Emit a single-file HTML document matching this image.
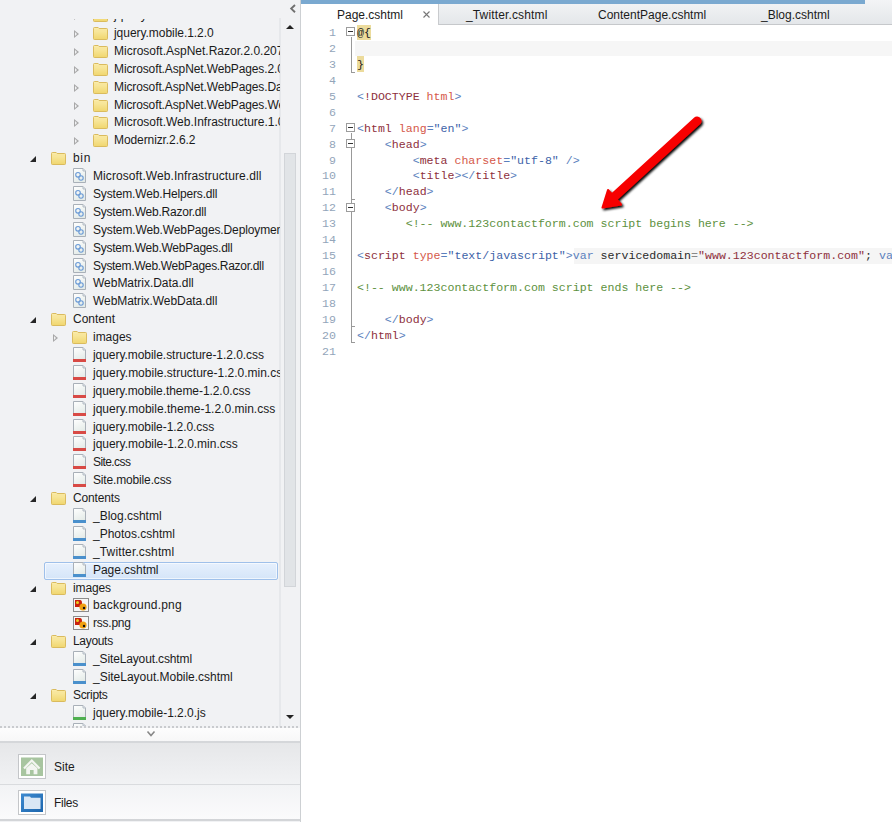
<!DOCTYPE html>
<html><head><meta charset="utf-8">
<style>
*{margin:0;padding:0;box-sizing:border-box}
html,body{width:892px;height:822px;overflow:hidden;background:#fff}
body{position:relative;font-family:"Liberation Sans",sans-serif}
#left{position:absolute;left:0;top:0;width:301px;height:822px;background:#f1f2f4;border-right:1px solid #cdd0d3;overflow:hidden}
#tree{position:absolute;left:0;top:19px;width:280px;height:707px;overflow:hidden}
.row{position:absolute;left:0;width:280px;height:18px}
.lbl{position:absolute;top:0;height:18px;line-height:18px;font-size:12px;color:#1b1b1b;white-space:nowrap}
.icw{position:absolute;line-height:0}
.ic{display:block}
.tri-e{position:absolute;top:7px;width:0;height:0;border-left:6px solid transparent;border-bottom:6px solid #262626}
.tri-c{position:absolute;top:6px;width:0;height:0;border-top:4px solid transparent;border-bottom:4px solid transparent;border-left:5px solid #a8a8a8}
.tri-c::after{content:"";position:absolute;left:-4px;top:-2px;border-top:2px solid transparent;border-bottom:2px solid transparent;border-left:2.5px solid #f1f2f4}
#sel{position:absolute;left:44px;top:561.5px;width:234px;height:18px;border:1px solid #9fc0ea;border-radius:2px;background:linear-gradient(#e6f0fd,#d5e5f8);box-shadow:inset 0 0 0 1px rgba(255,255,255,0.6)}
#vtrack{position:absolute;left:279px;top:18px;width:2px;height:709px;background:#e6e8eb}
#thumb{position:absolute;left:284px;top:153px;width:12px;height:434px;background:#e1e4e7;border:1px solid #d2d5d9}
#up{position:absolute;left:286px;top:25px;width:0;height:0;border-left:4px solid transparent;border-right:4px solid transparent;border-bottom:4px solid #222}
#down{position:absolute;left:286px;top:715px;width:0;height:0;border-left:4px solid transparent;border-right:4px solid transparent;border-top:4px solid #222}
#dots{position:absolute;left:0;top:726px;width:300px;height:2px;background:repeating-linear-gradient(90deg,#c9cbce 0 2px,transparent 2px 4px)}
#chev{position:absolute;left:0;top:728px;width:300px;height:13px;background:linear-gradient(#fdfdfd,#f7f7f8)}
#bar1{position:absolute;left:0;top:741px;width:300px;height:2px;background:#d5d7da}
#site{position:absolute;left:0;top:743px;width:300px;height:41px;background:linear-gradient(#e6e7e9,#f1f2f4)}
#sep{position:absolute;left:0;top:784px;width:300px;height:1px;background:#d9dbde}
#files{position:absolute;left:0;top:785px;width:300px;height:35px;background:linear-gradient(#f2f3f5,#fbfbfc)}
#bar2{position:absolute;left:0;top:819px;width:300px;height:2px;background:#d3d5d8}
.bbox{position:absolute;left:18px;width:28px;height:25px;border:1px solid #c4c6c9;background:#fff}
.btxt{position:absolute;left:54px;font-size:12px;color:#1b1b1b;height:18px;line-height:18px}
#tabs{position:absolute;left:301px;top:0;width:591px;height:25px;background:linear-gradient(#f3f4f6,#e4e7ea);border-bottom:1px solid #c6c8cb}
#blue{position:absolute;left:301px;top:0;width:564px;height:4px;background:#7aa9d0}
#atab{position:absolute;left:301px;top:4px;width:138px;height:21px;background:#fff;border-right:1px solid #c9cbce}
.tt{position:absolute;top:6px;height:18px;line-height:18px;font-size:12px;color:#1b1b1b;white-space:nowrap}
#close{position:absolute;left:422px;top:9px;font-size:11px;color:#555;line-height:10px}
.ln{position:absolute;left:310px;width:26px;text-align:right;height:16px;line-height:16px;font-family:"Liberation Mono",monospace;font-size:11.6px;color:#93a5ba}
.cl{position:absolute;left:357px;height:16px;line-height:16px;font-family:"Liberation Mono",monospace;font-size:11.6px;white-space:pre;color:#1b1b1b}
.d{color:#5a7fbd}.e{color:#8e2f3c}.a{color:#d5584a}.v{color:#3d62a8}.c{color:#5d9140}.k{color:#5a7fbd}.j{color:#2a2a2a}.g{color:#888}.s{color:#8e2f3c}
.r{color:#1b1b1b}
.hl{position:absolute;background:#ecdb9c}
#curline{position:absolute;left:355px;top:41px;width:537px;height:15px;background:#f6f6f6}
.fb{position:absolute;left:346px;width:9px;height:9px;border:1px solid #9c9c9c;background:#fff}
.fb::after{content:"";position:absolute;left:1px;top:3px;width:5px;height:1px;background:#333}
.fv{position:absolute;left:351px;width:1px;background:#999}
.ft{position:absolute;left:351px;width:4px;height:1px;background:#999}
#arrow{position:absolute;left:0;top:0}
</style></head><body>
<div id="left">
 <div id="vtrack"></div>
 <div id="sel"></div>
 <div id="tree">
<div class="row" style="top:-12.89px"><span class="tri-c" style="left:74px"></span><span class="icw" style="left:93px;top:3px"><svg class="ic" width="15" height="13" viewBox="0 0 16 13" preserveAspectRatio="none"><defs><linearGradient id="fg" x1="0" y1="0" x2="0" y2="1"><stop offset="0" stop-color="#fbeeb0"/><stop offset="1" stop-color="#f0d66e"/></linearGradient></defs><path d="M0.5 1.5 Q0.5 0.5 1.5 0.5 H5.5 L6.5 1.5 H14.5 Q15.5 1.5 15.5 2.5 V11.5 Q15.5 12.5 14.5 12.5 H1.5 Q0.5 12.5 0.5 11.5 Z" fill="url(#fg)" stroke="#d9b95a" stroke-width="1"/><path d="M1 3 H15" stroke="#f8e59a" stroke-width="1"/></svg></span><span class="lbl" style="left:114px">jquery.1.8.2</span></div>
<div class="row" style="top:5.00px"><span class="tri-c" style="left:74px"></span><span class="icw" style="left:93px;top:3px"><svg class="ic" width="15" height="13" viewBox="0 0 16 13" preserveAspectRatio="none"><defs><linearGradient id="fg" x1="0" y1="0" x2="0" y2="1"><stop offset="0" stop-color="#fbeeb0"/><stop offset="1" stop-color="#f0d66e"/></linearGradient></defs><path d="M0.5 1.5 Q0.5 0.5 1.5 0.5 H5.5 L6.5 1.5 H14.5 Q15.5 1.5 15.5 2.5 V11.5 Q15.5 12.5 14.5 12.5 H1.5 Q0.5 12.5 0.5 11.5 Z" fill="url(#fg)" stroke="#d9b95a" stroke-width="1"/><path d="M1 3 H15" stroke="#f8e59a" stroke-width="1"/></svg></span><span class="lbl" style="left:114px;letter-spacing:-0.044px">jquery.mobile.1.2.0</span></div>
<div class="row" style="top:22.89px"><span class="tri-c" style="left:74px"></span><span class="icw" style="left:93px;top:3px"><svg class="ic" width="15" height="13" viewBox="0 0 16 13" preserveAspectRatio="none"><defs><linearGradient id="fg" x1="0" y1="0" x2="0" y2="1"><stop offset="0" stop-color="#fbeeb0"/><stop offset="1" stop-color="#f0d66e"/></linearGradient></defs><path d="M0.5 1.5 Q0.5 0.5 1.5 0.5 H5.5 L6.5 1.5 H14.5 Q15.5 1.5 15.5 2.5 V11.5 Q15.5 12.5 14.5 12.5 H1.5 Q0.5 12.5 0.5 11.5 Z" fill="url(#fg)" stroke="#d9b95a" stroke-width="1"/><path d="M1 3 H15" stroke="#f8e59a" stroke-width="1"/></svg></span><span class="lbl" style="left:114px">Microsoft.AspNet.Razor.2.0.20715.0</span></div>
<div class="row" style="top:40.78px"><span class="tri-c" style="left:74px"></span><span class="icw" style="left:93px;top:3px"><svg class="ic" width="15" height="13" viewBox="0 0 16 13" preserveAspectRatio="none"><defs><linearGradient id="fg" x1="0" y1="0" x2="0" y2="1"><stop offset="0" stop-color="#fbeeb0"/><stop offset="1" stop-color="#f0d66e"/></linearGradient></defs><path d="M0.5 1.5 Q0.5 0.5 1.5 0.5 H5.5 L6.5 1.5 H14.5 Q15.5 1.5 15.5 2.5 V11.5 Q15.5 12.5 14.5 12.5 H1.5 Q0.5 12.5 0.5 11.5 Z" fill="url(#fg)" stroke="#d9b95a" stroke-width="1"/><path d="M1 3 H15" stroke="#f8e59a" stroke-width="1"/></svg></span><span class="lbl" style="left:114px;letter-spacing:-0.12px">Microsoft.AspNet.WebPages.2.0.20710.0</span></div>
<div class="row" style="top:58.67px"><span class="tri-c" style="left:74px"></span><span class="icw" style="left:93px;top:3px"><svg class="ic" width="15" height="13" viewBox="0 0 16 13" preserveAspectRatio="none"><defs><linearGradient id="fg" x1="0" y1="0" x2="0" y2="1"><stop offset="0" stop-color="#fbeeb0"/><stop offset="1" stop-color="#f0d66e"/></linearGradient></defs><path d="M0.5 1.5 Q0.5 0.5 1.5 0.5 H5.5 L6.5 1.5 H14.5 Q15.5 1.5 15.5 2.5 V11.5 Q15.5 12.5 14.5 12.5 H1.5 Q0.5 12.5 0.5 11.5 Z" fill="url(#fg)" stroke="#d9b95a" stroke-width="1"/><path d="M1 3 H15" stroke="#f8e59a" stroke-width="1"/></svg></span><span class="lbl" style="left:114px;letter-spacing:-0.12px">Microsoft.AspNet.WebPages.Data.2.0.20710.0</span></div>
<div class="row" style="top:76.56px"><span class="tri-c" style="left:74px"></span><span class="icw" style="left:93px;top:3px"><svg class="ic" width="15" height="13" viewBox="0 0 16 13" preserveAspectRatio="none"><defs><linearGradient id="fg" x1="0" y1="0" x2="0" y2="1"><stop offset="0" stop-color="#fbeeb0"/><stop offset="1" stop-color="#f0d66e"/></linearGradient></defs><path d="M0.5 1.5 Q0.5 0.5 1.5 0.5 H5.5 L6.5 1.5 H14.5 Q15.5 1.5 15.5 2.5 V11.5 Q15.5 12.5 14.5 12.5 H1.5 Q0.5 12.5 0.5 11.5 Z" fill="url(#fg)" stroke="#d9b95a" stroke-width="1"/><path d="M1 3 H15" stroke="#f8e59a" stroke-width="1"/></svg></span><span class="lbl" style="left:114px;letter-spacing:-0.12px">Microsoft.AspNet.WebPages.WebData.2.0.20710.0</span></div>
<div class="row" style="top:94.45px"><span class="tri-c" style="left:74px"></span><span class="icw" style="left:93px;top:3px"><svg class="ic" width="15" height="13" viewBox="0 0 16 13" preserveAspectRatio="none"><defs><linearGradient id="fg" x1="0" y1="0" x2="0" y2="1"><stop offset="0" stop-color="#fbeeb0"/><stop offset="1" stop-color="#f0d66e"/></linearGradient></defs><path d="M0.5 1.5 Q0.5 0.5 1.5 0.5 H5.5 L6.5 1.5 H14.5 Q15.5 1.5 15.5 2.5 V11.5 Q15.5 12.5 14.5 12.5 H1.5 Q0.5 12.5 0.5 11.5 Z" fill="url(#fg)" stroke="#d9b95a" stroke-width="1"/><path d="M1 3 H15" stroke="#f8e59a" stroke-width="1"/></svg></span><span class="lbl" style="left:114px">Microsoft.Web.Infrastructure.1.0.0.0</span></div>
<div class="row" style="top:112.34px"><span class="tri-c" style="left:74px"></span><span class="icw" style="left:93px;top:3px"><svg class="ic" width="15" height="13" viewBox="0 0 16 13" preserveAspectRatio="none"><defs><linearGradient id="fg" x1="0" y1="0" x2="0" y2="1"><stop offset="0" stop-color="#fbeeb0"/><stop offset="1" stop-color="#f0d66e"/></linearGradient></defs><path d="M0.5 1.5 Q0.5 0.5 1.5 0.5 H5.5 L6.5 1.5 H14.5 Q15.5 1.5 15.5 2.5 V11.5 Q15.5 12.5 14.5 12.5 H1.5 Q0.5 12.5 0.5 11.5 Z" fill="url(#fg)" stroke="#d9b95a" stroke-width="1"/><path d="M1 3 H15" stroke="#f8e59a" stroke-width="1"/></svg></span><span class="lbl" style="left:114px;letter-spacing:-0.093px">Modernizr.2.6.2</span></div>
<div class="row" style="top:130.23px"><span class="tri-e" style="left:30px"></span><span class="icw" style="left:51px;top:3px"><svg class="ic" width="15" height="13" viewBox="0 0 16 13" preserveAspectRatio="none"><defs><linearGradient id="fg" x1="0" y1="0" x2="0" y2="1"><stop offset="0" stop-color="#fbeeb0"/><stop offset="1" stop-color="#f0d66e"/></linearGradient></defs><path d="M0.5 1.5 Q0.5 0.5 1.5 0.5 H5.5 L6.5 1.5 H14.5 Q15.5 1.5 15.5 2.5 V11.5 Q15.5 12.5 14.5 12.5 H1.5 Q0.5 12.5 0.5 11.5 Z" fill="url(#fg)" stroke="#d9b95a" stroke-width="1"/><path d="M1 3 H15" stroke="#f8e59a" stroke-width="1"/></svg></span><span class="lbl" style="left:73px;letter-spacing:0.700px">bin</span></div>
<div class="row" style="top:148.12px"><span class="icw" style="left:73px;top:1px"><svg class="ic" width="13" height="15" viewBox="0 0 13 15"><defs><linearGradient id="fgr" x1="0" y1="0" x2="0.4" y2="1"><stop offset="0" stop-color="#ffffff"/><stop offset="1" stop-color="#e4ebe8"/></linearGradient></defs><path d="M0.5 0.5 H10 L12.5 3 V14.5 H0.5 Z" fill="url(#fgr)" stroke="#a9b0b8" stroke-width="1"/><path d="M10 0.5 V3 H12.5" fill="#dfe4ea" stroke="#b5bcc4" stroke-width="1"/><g fill="none" stroke="#6a9ad6" stroke-width="1.1"><circle cx="5" cy="6.8" r="2.3"/><circle cx="8" cy="10" r="2.2"/></g></svg></span><span class="lbl" style="left:93px;letter-spacing:0.081px">Microsoft.Web.Infrastructure.dll</span></div>
<div class="row" style="top:166.01px"><span class="icw" style="left:73px;top:1px"><svg class="ic" width="13" height="15" viewBox="0 0 13 15"><defs><linearGradient id="fgr" x1="0" y1="0" x2="0.4" y2="1"><stop offset="0" stop-color="#ffffff"/><stop offset="1" stop-color="#e4ebe8"/></linearGradient></defs><path d="M0.5 0.5 H10 L12.5 3 V14.5 H0.5 Z" fill="url(#fgr)" stroke="#a9b0b8" stroke-width="1"/><path d="M10 0.5 V3 H12.5" fill="#dfe4ea" stroke="#b5bcc4" stroke-width="1"/><g fill="none" stroke="#6a9ad6" stroke-width="1.1"><circle cx="5" cy="6.8" r="2.3"/><circle cx="8" cy="10" r="2.2"/></g></svg></span><span class="lbl" style="left:93px;letter-spacing:-0.157px">System.Web.Helpers.dll</span></div>
<div class="row" style="top:183.90px"><span class="icw" style="left:73px;top:1px"><svg class="ic" width="13" height="15" viewBox="0 0 13 15"><defs><linearGradient id="fgr" x1="0" y1="0" x2="0.4" y2="1"><stop offset="0" stop-color="#ffffff"/><stop offset="1" stop-color="#e4ebe8"/></linearGradient></defs><path d="M0.5 0.5 H10 L12.5 3 V14.5 H0.5 Z" fill="url(#fgr)" stroke="#a9b0b8" stroke-width="1"/><path d="M10 0.5 V3 H12.5" fill="#dfe4ea" stroke="#b5bcc4" stroke-width="1"/><g fill="none" stroke="#6a9ad6" stroke-width="1.1"><circle cx="5" cy="6.8" r="2.3"/><circle cx="8" cy="10" r="2.2"/></g></svg></span><span class="lbl" style="left:93px;letter-spacing:-0.232px">System.Web.Razor.dll</span></div>
<div class="row" style="top:201.79px"><span class="icw" style="left:73px;top:1px"><svg class="ic" width="13" height="15" viewBox="0 0 13 15"><defs><linearGradient id="fgr" x1="0" y1="0" x2="0.4" y2="1"><stop offset="0" stop-color="#ffffff"/><stop offset="1" stop-color="#e4ebe8"/></linearGradient></defs><path d="M0.5 0.5 H10 L12.5 3 V14.5 H0.5 Z" fill="url(#fgr)" stroke="#a9b0b8" stroke-width="1"/><path d="M10 0.5 V3 H12.5" fill="#dfe4ea" stroke="#b5bcc4" stroke-width="1"/><g fill="none" stroke="#6a9ad6" stroke-width="1.1"><circle cx="5" cy="6.8" r="2.3"/><circle cx="8" cy="10" r="2.2"/></g></svg></span><span class="lbl" style="left:93px;letter-spacing:-0.12px">System.Web.WebPages.Deployment.dll</span></div>
<div class="row" style="top:219.68px"><span class="icw" style="left:73px;top:1px"><svg class="ic" width="13" height="15" viewBox="0 0 13 15"><defs><linearGradient id="fgr" x1="0" y1="0" x2="0.4" y2="1"><stop offset="0" stop-color="#ffffff"/><stop offset="1" stop-color="#e4ebe8"/></linearGradient></defs><path d="M0.5 0.5 H10 L12.5 3 V14.5 H0.5 Z" fill="url(#fgr)" stroke="#a9b0b8" stroke-width="1"/><path d="M10 0.5 V3 H12.5" fill="#dfe4ea" stroke="#b5bcc4" stroke-width="1"/><g fill="none" stroke="#6a9ad6" stroke-width="1.1"><circle cx="5" cy="6.8" r="2.3"/><circle cx="8" cy="10" r="2.2"/></g></svg></span><span class="lbl" style="left:93px;letter-spacing:-0.241px">System.Web.WebPages.dll</span></div>
<div class="row" style="top:237.57px"><span class="icw" style="left:73px;top:1px"><svg class="ic" width="13" height="15" viewBox="0 0 13 15"><defs><linearGradient id="fgr" x1="0" y1="0" x2="0.4" y2="1"><stop offset="0" stop-color="#ffffff"/><stop offset="1" stop-color="#e4ebe8"/></linearGradient></defs><path d="M0.5 0.5 H10 L12.5 3 V14.5 H0.5 Z" fill="url(#fgr)" stroke="#a9b0b8" stroke-width="1"/><path d="M10 0.5 V3 H12.5" fill="#dfe4ea" stroke="#b5bcc4" stroke-width="1"/><g fill="none" stroke="#6a9ad6" stroke-width="1.1"><circle cx="5" cy="6.8" r="2.3"/><circle cx="8" cy="10" r="2.2"/></g></svg></span><span class="lbl" style="left:93px;letter-spacing:-0.304px">System.Web.WebPages.Razor.dll</span></div>
<div class="row" style="top:255.46px"><span class="icw" style="left:73px;top:1px"><svg class="ic" width="13" height="15" viewBox="0 0 13 15"><defs><linearGradient id="fgr" x1="0" y1="0" x2="0.4" y2="1"><stop offset="0" stop-color="#ffffff"/><stop offset="1" stop-color="#e4ebe8"/></linearGradient></defs><path d="M0.5 0.5 H10 L12.5 3 V14.5 H0.5 Z" fill="url(#fgr)" stroke="#a9b0b8" stroke-width="1"/><path d="M10 0.5 V3 H12.5" fill="#dfe4ea" stroke="#b5bcc4" stroke-width="1"/><g fill="none" stroke="#6a9ad6" stroke-width="1.1"><circle cx="5" cy="6.8" r="2.3"/><circle cx="8" cy="10" r="2.2"/></g></svg></span><span class="lbl" style="left:93px;letter-spacing:-0.024px">WebMatrix.Data.dll</span></div>
<div class="row" style="top:273.35px"><span class="icw" style="left:73px;top:1px"><svg class="ic" width="13" height="15" viewBox="0 0 13 15"><defs><linearGradient id="fgr" x1="0" y1="0" x2="0.4" y2="1"><stop offset="0" stop-color="#ffffff"/><stop offset="1" stop-color="#e4ebe8"/></linearGradient></defs><path d="M0.5 0.5 H10 L12.5 3 V14.5 H0.5 Z" fill="url(#fgr)" stroke="#a9b0b8" stroke-width="1"/><path d="M10 0.5 V3 H12.5" fill="#dfe4ea" stroke="#b5bcc4" stroke-width="1"/><g fill="none" stroke="#6a9ad6" stroke-width="1.1"><circle cx="5" cy="6.8" r="2.3"/><circle cx="8" cy="10" r="2.2"/></g></svg></span><span class="lbl" style="left:93px;letter-spacing:-0.065px">WebMatrix.WebData.dll</span></div>
<div class="row" style="top:291.24px"><span class="tri-e" style="left:30px"></span><span class="icw" style="left:51px;top:3px"><svg class="ic" width="15" height="13" viewBox="0 0 16 13" preserveAspectRatio="none"><defs><linearGradient id="fg" x1="0" y1="0" x2="0" y2="1"><stop offset="0" stop-color="#fbeeb0"/><stop offset="1" stop-color="#f0d66e"/></linearGradient></defs><path d="M0.5 1.5 Q0.5 0.5 1.5 0.5 H5.5 L6.5 1.5 H14.5 Q15.5 1.5 15.5 2.5 V11.5 Q15.5 12.5 14.5 12.5 H1.5 Q0.5 12.5 0.5 11.5 Z" fill="url(#fg)" stroke="#d9b95a" stroke-width="1"/><path d="M1 3 H15" stroke="#f8e59a" stroke-width="1"/></svg></span><span class="lbl" style="left:73px;letter-spacing:0.000px">Content</span></div>
<div class="row" style="top:309.13px"><span class="tri-c" style="left:53px"></span><span class="icw" style="left:72px;top:3px"><svg class="ic" width="15" height="13" viewBox="0 0 16 13" preserveAspectRatio="none"><defs><linearGradient id="fg" x1="0" y1="0" x2="0" y2="1"><stop offset="0" stop-color="#fbeeb0"/><stop offset="1" stop-color="#f0d66e"/></linearGradient></defs><path d="M0.5 1.5 Q0.5 0.5 1.5 0.5 H5.5 L6.5 1.5 H14.5 Q15.5 1.5 15.5 2.5 V11.5 Q15.5 12.5 14.5 12.5 H1.5 Q0.5 12.5 0.5 11.5 Z" fill="url(#fg)" stroke="#d9b95a" stroke-width="1"/><path d="M1 3 H15" stroke="#f8e59a" stroke-width="1"/></svg></span><span class="lbl" style="left:93px;letter-spacing:-0.020px">images</span></div>
<div class="row" style="top:327.02px"><span class="icw" style="left:73px;top:1px"><svg class="ic" width="13" height="15" viewBox="0 0 13 15"><defs><linearGradient id="fgr" x1="0" y1="0" x2="0.4" y2="1"><stop offset="0" stop-color="#ffffff"/><stop offset="1" stop-color="#e4ebe8"/></linearGradient></defs><path d="M0.5 0.5 H10 L12.5 3 V14.5 H0.5 Z" fill="url(#fgr)" stroke="#a9b0b8" stroke-width="1"/><path d="M10 0.5 V3 H12.5" fill="#dfe4ea" stroke="#b5bcc4" stroke-width="1"/><rect x="0" y="12" width="13" height="3" fill="#d84a45"/></svg></span><span class="lbl" style="left:93px;letter-spacing:-0.047px">jquery.mobile.structure-1.2.0.css</span></div>
<div class="row" style="top:344.91px"><span class="icw" style="left:73px;top:1px"><svg class="ic" width="13" height="15" viewBox="0 0 13 15"><defs><linearGradient id="fgr" x1="0" y1="0" x2="0.4" y2="1"><stop offset="0" stop-color="#ffffff"/><stop offset="1" stop-color="#e4ebe8"/></linearGradient></defs><path d="M0.5 0.5 H10 L12.5 3 V14.5 H0.5 Z" fill="url(#fgr)" stroke="#a9b0b8" stroke-width="1"/><path d="M10 0.5 V3 H12.5" fill="#dfe4ea" stroke="#b5bcc4" stroke-width="1"/><rect x="0" y="12" width="13" height="3" fill="#d84a45"/></svg></span><span class="lbl" style="left:93px">jquery.mobile.structure-1.2.0.min.css</span></div>
<div class="row" style="top:362.80px"><span class="icw" style="left:73px;top:1px"><svg class="ic" width="13" height="15" viewBox="0 0 13 15"><defs><linearGradient id="fgr" x1="0" y1="0" x2="0.4" y2="1"><stop offset="0" stop-color="#ffffff"/><stop offset="1" stop-color="#e4ebe8"/></linearGradient></defs><path d="M0.5 0.5 H10 L12.5 3 V14.5 H0.5 Z" fill="url(#fgr)" stroke="#a9b0b8" stroke-width="1"/><path d="M10 0.5 V3 H12.5" fill="#dfe4ea" stroke="#b5bcc4" stroke-width="1"/><rect x="0" y="12" width="13" height="3" fill="#d84a45"/></svg></span><span class="lbl" style="left:93px;letter-spacing:-0.064px">jquery.mobile.theme-1.2.0.css</span></div>
<div class="row" style="top:380.69px"><span class="icw" style="left:73px;top:1px"><svg class="ic" width="13" height="15" viewBox="0 0 13 15"><defs><linearGradient id="fgr" x1="0" y1="0" x2="0.4" y2="1"><stop offset="0" stop-color="#ffffff"/><stop offset="1" stop-color="#e4ebe8"/></linearGradient></defs><path d="M0.5 0.5 H10 L12.5 3 V14.5 H0.5 Z" fill="url(#fgr)" stroke="#a9b0b8" stroke-width="1"/><path d="M10 0.5 V3 H12.5" fill="#dfe4ea" stroke="#b5bcc4" stroke-width="1"/><rect x="0" y="12" width="13" height="3" fill="#d84a45"/></svg></span><span class="lbl" style="left:93px;letter-spacing:0.012px">jquery.mobile.theme-1.2.0.min.css</span></div>
<div class="row" style="top:398.58px"><span class="icw" style="left:73px;top:1px"><svg class="ic" width="13" height="15" viewBox="0 0 13 15"><defs><linearGradient id="fgr" x1="0" y1="0" x2="0.4" y2="1"><stop offset="0" stop-color="#ffffff"/><stop offset="1" stop-color="#e4ebe8"/></linearGradient></defs><path d="M0.5 0.5 H10 L12.5 3 V14.5 H0.5 Z" fill="url(#fgr)" stroke="#a9b0b8" stroke-width="1"/><path d="M10 0.5 V3 H12.5" fill="#dfe4ea" stroke="#b5bcc4" stroke-width="1"/><rect x="0" y="12" width="13" height="3" fill="#d84a45"/></svg></span><span class="lbl" style="left:93px;letter-spacing:-0.059px">jquery.mobile-1.2.0.css</span></div>
<div class="row" style="top:416.47px"><span class="icw" style="left:73px;top:1px"><svg class="ic" width="13" height="15" viewBox="0 0 13 15"><defs><linearGradient id="fgr" x1="0" y1="0" x2="0.4" y2="1"><stop offset="0" stop-color="#ffffff"/><stop offset="1" stop-color="#e4ebe8"/></linearGradient></defs><path d="M0.5 0.5 H10 L12.5 3 V14.5 H0.5 Z" fill="url(#fgr)" stroke="#a9b0b8" stroke-width="1"/><path d="M10 0.5 V3 H12.5" fill="#dfe4ea" stroke="#b5bcc4" stroke-width="1"/><rect x="0" y="12" width="13" height="3" fill="#d84a45"/></svg></span><span class="lbl" style="left:93px;letter-spacing:-0.019px">jquery.mobile-1.2.0.min.css</span></div>
<div class="row" style="top:434.36px"><span class="icw" style="left:73px;top:1px"><svg class="ic" width="13" height="15" viewBox="0 0 13 15"><defs><linearGradient id="fgr" x1="0" y1="0" x2="0.4" y2="1"><stop offset="0" stop-color="#ffffff"/><stop offset="1" stop-color="#e4ebe8"/></linearGradient></defs><path d="M0.5 0.5 H10 L12.5 3 V14.5 H0.5 Z" fill="url(#fgr)" stroke="#a9b0b8" stroke-width="1"/><path d="M10 0.5 V3 H12.5" fill="#dfe4ea" stroke="#b5bcc4" stroke-width="1"/><rect x="0" y="12" width="13" height="3" fill="#d84a45"/></svg></span><span class="lbl" style="left:93px;letter-spacing:-0.586px">Site.css</span></div>
<div class="row" style="top:452.25px"><span class="icw" style="left:73px;top:1px"><svg class="ic" width="13" height="15" viewBox="0 0 13 15"><defs><linearGradient id="fgr" x1="0" y1="0" x2="0.4" y2="1"><stop offset="0" stop-color="#ffffff"/><stop offset="1" stop-color="#e4ebe8"/></linearGradient></defs><path d="M0.5 0.5 H10 L12.5 3 V14.5 H0.5 Z" fill="url(#fgr)" stroke="#a9b0b8" stroke-width="1"/><path d="M10 0.5 V3 H12.5" fill="#dfe4ea" stroke="#b5bcc4" stroke-width="1"/><rect x="0" y="12" width="13" height="3" fill="#d84a45"/></svg></span><span class="lbl" style="left:93px;letter-spacing:-0.157px">Site.mobile.css</span></div>
<div class="row" style="top:470.14px"><span class="tri-e" style="left:30px"></span><span class="icw" style="left:51px;top:3px"><svg class="ic" width="15" height="13" viewBox="0 0 16 13" preserveAspectRatio="none"><defs><linearGradient id="fg" x1="0" y1="0" x2="0" y2="1"><stop offset="0" stop-color="#fbeeb0"/><stop offset="1" stop-color="#f0d66e"/></linearGradient></defs><path d="M0.5 1.5 Q0.5 0.5 1.5 0.5 H5.5 L6.5 1.5 H14.5 Q15.5 1.5 15.5 2.5 V11.5 Q15.5 12.5 14.5 12.5 H1.5 Q0.5 12.5 0.5 11.5 Z" fill="url(#fg)" stroke="#d9b95a" stroke-width="1"/><path d="M1 3 H15" stroke="#f8e59a" stroke-width="1"/></svg></span><span class="lbl" style="left:73px;letter-spacing:-0.143px">Contents</span></div>
<div class="row" style="top:488.03px"><span class="icw" style="left:73px;top:1px"><svg class="ic" width="13" height="15" viewBox="0 0 13 15"><defs><linearGradient id="fgr" x1="0" y1="0" x2="0.4" y2="1"><stop offset="0" stop-color="#ffffff"/><stop offset="1" stop-color="#e4ebe8"/></linearGradient></defs><path d="M0.5 0.5 H10 L12.5 3 V14.5 H0.5 Z" fill="url(#fgr)" stroke="#a9b0b8" stroke-width="1"/><path d="M10 0.5 V3 H12.5" fill="#dfe4ea" stroke="#b5bcc4" stroke-width="1"/><rect x="0" y="12" width="13" height="3" fill="#4a90cc"/></svg></span><span class="lbl" style="left:93px;letter-spacing:-0.009px">_Blog.cshtml</span></div>
<div class="row" style="top:505.92px"><span class="icw" style="left:73px;top:1px"><svg class="ic" width="13" height="15" viewBox="0 0 13 15"><defs><linearGradient id="fgr" x1="0" y1="0" x2="0.4" y2="1"><stop offset="0" stop-color="#ffffff"/><stop offset="1" stop-color="#e4ebe8"/></linearGradient></defs><path d="M0.5 0.5 H10 L12.5 3 V14.5 H0.5 Z" fill="url(#fgr)" stroke="#a9b0b8" stroke-width="1"/><path d="M10 0.5 V3 H12.5" fill="#dfe4ea" stroke="#b5bcc4" stroke-width="1"/><rect x="0" y="12" width="13" height="3" fill="#4a90cc"/></svg></span><span class="lbl" style="left:93px;letter-spacing:-0.015px">_Photos.cshtml</span></div>
<div class="row" style="top:523.81px"><span class="icw" style="left:73px;top:1px"><svg class="ic" width="13" height="15" viewBox="0 0 13 15"><defs><linearGradient id="fgr" x1="0" y1="0" x2="0.4" y2="1"><stop offset="0" stop-color="#ffffff"/><stop offset="1" stop-color="#e4ebe8"/></linearGradient></defs><path d="M0.5 0.5 H10 L12.5 3 V14.5 H0.5 Z" fill="url(#fgr)" stroke="#a9b0b8" stroke-width="1"/><path d="M10 0.5 V3 H12.5" fill="#dfe4ea" stroke="#b5bcc4" stroke-width="1"/><rect x="0" y="12" width="13" height="3" fill="#4a90cc"/></svg></span><span class="lbl" style="left:93px;letter-spacing:0.129px">_Twitter.cshtml</span></div>
<div class="row" style="top:541.70px"><span class="icw" style="left:73px;top:1px"><svg class="ic" width="13" height="15" viewBox="0 0 13 15"><defs><linearGradient id="fgr" x1="0" y1="0" x2="0.4" y2="1"><stop offset="0" stop-color="#ffffff"/><stop offset="1" stop-color="#e4ebe8"/></linearGradient></defs><path d="M0.5 0.5 H10 L12.5 3 V14.5 H0.5 Z" fill="url(#fgr)" stroke="#a9b0b8" stroke-width="1"/><path d="M10 0.5 V3 H12.5" fill="#dfe4ea" stroke="#b5bcc4" stroke-width="1"/><rect x="0" y="12" width="13" height="3" fill="#4a90cc"/></svg></span><span class="lbl" style="left:93px;letter-spacing:-0.050px">Page.cshtml</span></div>
<div class="row" style="top:559.59px"><span class="tri-e" style="left:30px"></span><span class="icw" style="left:51px;top:3px"><svg class="ic" width="15" height="13" viewBox="0 0 16 13" preserveAspectRatio="none"><defs><linearGradient id="fg" x1="0" y1="0" x2="0" y2="1"><stop offset="0" stop-color="#fbeeb0"/><stop offset="1" stop-color="#f0d66e"/></linearGradient></defs><path d="M0.5 1.5 Q0.5 0.5 1.5 0.5 H5.5 L6.5 1.5 H14.5 Q15.5 1.5 15.5 2.5 V11.5 Q15.5 12.5 14.5 12.5 H1.5 Q0.5 12.5 0.5 11.5 Z" fill="url(#fg)" stroke="#d9b95a" stroke-width="1"/><path d="M1 3 H15" stroke="#f8e59a" stroke-width="1"/></svg></span><span class="lbl" style="left:73px;letter-spacing:-0.140px">images</span></div>
<div class="row" style="top:577.48px"><span class="icw" style="left:73px;top:2px"><svg class="ic" width="16" height="14" viewBox="0 0 16 14"><rect x="0.5" y="0.5" width="15" height="13" fill="#f6f6f4" stroke="#8c8c8c"/><path d="M2 2 H7 Q9 2 9 5 V9 H2 Z" fill="#c8200e"/><circle cx="4.5" cy="4.5" r="1.5" fill="#e8d020"/><circle cx="10" cy="9" r="3.6" fill="#f0a010"/><circle cx="11" cy="10" r="1.2" fill="#111"/></svg></span><span class="lbl" style="left:93px;letter-spacing:0.200px">background.png</span></div>
<div class="row" style="top:595.37px"><span class="icw" style="left:73px;top:2px"><svg class="ic" width="16" height="14" viewBox="0 0 16 14"><rect x="0.5" y="0.5" width="15" height="13" fill="#f6f6f4" stroke="#8c8c8c"/><path d="M2 2 H7 Q9 2 9 5 V9 H2 Z" fill="#c8200e"/><circle cx="4.5" cy="4.5" r="1.5" fill="#e8d020"/><circle cx="10" cy="9" r="3.6" fill="#f0a010"/><circle cx="11" cy="10" r="1.2" fill="#111"/></svg></span><span class="lbl" style="left:93px;letter-spacing:-0.233px">rss.png</span></div>
<div class="row" style="top:613.26px"><span class="tri-e" style="left:30px"></span><span class="icw" style="left:51px;top:3px"><svg class="ic" width="15" height="13" viewBox="0 0 16 13" preserveAspectRatio="none"><defs><linearGradient id="fg" x1="0" y1="0" x2="0" y2="1"><stop offset="0" stop-color="#fbeeb0"/><stop offset="1" stop-color="#f0d66e"/></linearGradient></defs><path d="M0.5 1.5 Q0.5 0.5 1.5 0.5 H5.5 L6.5 1.5 H14.5 Q15.5 1.5 15.5 2.5 V11.5 Q15.5 12.5 14.5 12.5 H1.5 Q0.5 12.5 0.5 11.5 Z" fill="url(#fg)" stroke="#d9b95a" stroke-width="1"/><path d="M1 3 H15" stroke="#f8e59a" stroke-width="1"/></svg></span><span class="lbl" style="left:73px;letter-spacing:-0.317px">Layouts</span></div>
<div class="row" style="top:631.15px"><span class="icw" style="left:73px;top:1px"><svg class="ic" width="13" height="15" viewBox="0 0 13 15"><defs><linearGradient id="fgr" x1="0" y1="0" x2="0.4" y2="1"><stop offset="0" stop-color="#ffffff"/><stop offset="1" stop-color="#e4ebe8"/></linearGradient></defs><path d="M0.5 0.5 H10 L12.5 3 V14.5 H0.5 Z" fill="url(#fgr)" stroke="#a9b0b8" stroke-width="1"/><path d="M10 0.5 V3 H12.5" fill="#dfe4ea" stroke="#b5bcc4" stroke-width="1"/><rect x="0" y="12" width="13" height="3" fill="#4a90cc"/></svg></span><span class="lbl" style="left:93px;letter-spacing:-0.135px">_SiteLayout.cshtml</span></div>
<div class="row" style="top:649.04px"><span class="icw" style="left:73px;top:1px"><svg class="ic" width="13" height="15" viewBox="0 0 13 15"><defs><linearGradient id="fgr" x1="0" y1="0" x2="0.4" y2="1"><stop offset="0" stop-color="#ffffff"/><stop offset="1" stop-color="#e4ebe8"/></linearGradient></defs><path d="M0.5 0.5 H10 L12.5 3 V14.5 H0.5 Z" fill="url(#fgr)" stroke="#a9b0b8" stroke-width="1"/><path d="M10 0.5 V3 H12.5" fill="#dfe4ea" stroke="#b5bcc4" stroke-width="1"/><rect x="0" y="12" width="13" height="3" fill="#4a90cc"/></svg></span><span class="lbl" style="left:93px;letter-spacing:-0.017px">_SiteLayout.Mobile.cshtml</span></div>
<div class="row" style="top:666.93px"><span class="tri-e" style="left:30px"></span><span class="icw" style="left:51px;top:3px"><svg class="ic" width="15" height="13" viewBox="0 0 16 13" preserveAspectRatio="none"><defs><linearGradient id="fg" x1="0" y1="0" x2="0" y2="1"><stop offset="0" stop-color="#fbeeb0"/><stop offset="1" stop-color="#f0d66e"/></linearGradient></defs><path d="M0.5 1.5 Q0.5 0.5 1.5 0.5 H5.5 L6.5 1.5 H14.5 Q15.5 1.5 15.5 2.5 V11.5 Q15.5 12.5 14.5 12.5 H1.5 Q0.5 12.5 0.5 11.5 Z" fill="url(#fg)" stroke="#d9b95a" stroke-width="1"/><path d="M1 3 H15" stroke="#f8e59a" stroke-width="1"/></svg></span><span class="lbl" style="left:73px;letter-spacing:-0.317px">Scripts</span></div>
<div class="row" style="top:684.82px"><span class="icw" style="left:73px;top:1px"><svg class="ic" width="13" height="15" viewBox="0 0 13 15"><defs><linearGradient id="fgr" x1="0" y1="0" x2="0.4" y2="1"><stop offset="0" stop-color="#ffffff"/><stop offset="1" stop-color="#e4ebe8"/></linearGradient></defs><path d="M0.5 0.5 H10 L12.5 3 V14.5 H0.5 Z" fill="url(#fgr)" stroke="#a9b0b8" stroke-width="1"/><path d="M10 0.5 V3 H12.5" fill="#dfe4ea" stroke="#b5bcc4" stroke-width="1"/><rect x="0" y="12" width="13" height="3" fill="#4fb050"/></svg></span><span class="lbl" style="left:93px;letter-spacing:-0.024px">jquery.mobile-1.2.0.js</span></div>
<div class="row" style="top:702.71px"><span class="icw" style="left:73px;top:1px"><svg class="ic" width="13" height="15" viewBox="0 0 13 15"><defs><linearGradient id="fgr" x1="0" y1="0" x2="0.4" y2="1"><stop offset="0" stop-color="#ffffff"/><stop offset="1" stop-color="#e4ebe8"/></linearGradient></defs><path d="M0.5 0.5 H10 L12.5 3 V14.5 H0.5 Z" fill="url(#fgr)" stroke="#a9b0b8" stroke-width="1"/><path d="M10 0.5 V3 H12.5" fill="#dfe4ea" stroke="#b5bcc4" stroke-width="1"/><rect x="0" y="12" width="13" height="3" fill="#4fb050"/></svg></span><span class="lbl" style="left:93px">jquery.mobile-1.2.0.min.js</span></div>
 </div>
 <div id="thumb"></div>
 <svg style="position:absolute;left:289px;top:3.5px" width="8" height="9" viewBox="0 0 8 9"><path d="M6 1 L2.2 4.6 L6 8.2" fill="none" stroke="#707070" stroke-width="1.9"/></svg>
 <div id="up"></div>
 <div id="down"></div>
 <div id="dots"></div>
 <div id="chev"></div>
 <svg style="position:absolute;left:146px;top:730px" width="10" height="8" viewBox="0 0 10 8"><path d="M1.5 1.5 L5 5.5 L8.5 1.5" fill="none" stroke="#888" stroke-width="1.6"/></svg>
 <div id="bar1"></div>
 <div id="site"></div>
 <div id="sep"></div>
 <div id="files"></div>
 <div id="bar2"></div>
 <div class="bbox" style="top:754px"><svg width="26" height="23" viewBox="0 0 26 23" style="position:absolute;left:0;top:0"><rect x="2" y="2.5" width="22" height="18.5" fill="#a8c5a0"/><path d="M5 13.5 L12.8 5.5 L20.6 13.5" fill="none" stroke="#f3f5f1" stroke-width="2.2"/><path d="M7.2 13.2 L12.8 8.3 L18.4 13.2 V19.2 H14.6 V15 H11 V19.2 H7.2 Z" fill="#f3f5f1"/></svg></div>
 <div class="btxt" style="top:758px">Site</div>
 <div class="bbox" style="top:790px"><svg width="26" height="23" viewBox="0 0 26 23" style="position:absolute;left:0;top:0"><defs><linearGradient id="bg2" x1="0" y1="0" x2="1" y2="1"><stop offset="0" stop-color="#3d8ad0"/><stop offset="1" stop-color="#1d66ad"/></linearGradient></defs><rect x="2" y="2.5" width="22" height="18.5" fill="url(#bg2)"/><path d="M5 5.5 H11 L12 6.8 H21.5 V18 H5 Z" fill="#d9e7f5"/></svg></div>
 <div class="btxt" style="top:794px;letter-spacing:-0.3px">Files</div>
</div>
<div id="tabs"></div>
<div id="atab"></div>
<div id="blue"></div>
<div class="tt" style="left:337px">Page.cshtml</div>
<svg style="position:absolute;left:423px;top:10.5px" width="7" height="7" viewBox="0 0 7 7"><path d="M0.5 0.5 L6.5 6.5 M6.5 0.5 L0.5 6.5" stroke="#777" stroke-width="1.1"/></svg>
<div class="tt" style="left:466px;letter-spacing:0.14px">_Twitter.cshtml</div>
<div class="tt" style="left:598px">ContentPage.cshtml</div>
<div class="tt" style="left:761px">_Blog.cshtml</div>
<div id="curline"></div>
<div style="position:absolute;left:574px;top:248px;width:318px;height:15.5px;background:#f5f5f5"></div>
<div class="hl" style="left:357px;top:25px;width:14px;height:15px"></div>
<div class="hl" style="left:357px;top:56px;width:7px;height:16px"></div>
<div class="fv" style="top:36.90px;height:35.60px"></div>
<div class="ft" style="top:72.00px"></div>
<div class="fv" style="top:132.60px;height:210.20px"></div>
<div class="ft" style="top:342.30px"></div>
<div class="ft" style="top:199.30px"></div>
<div class="ft" style="top:326.20px"></div>
<div class="fb" style="top:27.40px"></div>
<div class="fb" style="top:123.10px"></div>
<div class="fb" style="top:139.05px"></div>
<div class="fb" style="top:202.85px"></div>
<div class="ln" style="top:24.90px">1</div>
<div class="cl" style="top:24.90px"><span class="r">@{</span></div>
<div class="ln" style="top:40.85px">2</div>
<div class="ln" style="top:56.80px">3</div>
<div class="cl" style="top:56.80px"><span class="r">}</span></div>
<div class="ln" style="top:72.75px">4</div>
<div class="ln" style="top:88.70px">5</div>
<div class="cl" style="top:88.70px"><span class="d">&lt;</span><span class="e">!DOCTYPE</span> <span class="a">html</span><span class="d">&gt;</span></div>
<div class="ln" style="top:104.65px">6</div>
<div class="ln" style="top:120.60px">7</div>
<div class="cl" style="top:120.60px"><span class="d">&lt;</span><span class="e">html</span> <span class="a">lang</span><span class="d">=</span><span class="v">"en"</span><span class="d">&gt;</span></div>
<div class="ln" style="top:136.55px">8</div>
<div class="cl" style="top:136.55px">    <span class="d">&lt;</span><span class="e">head</span><span class="d">&gt;</span></div>
<div class="ln" style="top:152.50px">9</div>
<div class="cl" style="top:152.50px">        <span class="d">&lt;</span><span class="e">meta</span> <span class="a">charset</span><span class="d">=</span><span class="v">"utf-8"</span> <span class="d">/&gt;</span></div>
<div class="ln" style="top:168.45px">10</div>
<div class="cl" style="top:168.45px">        <span class="d">&lt;</span><span class="e">title</span><span class="d">&gt;&lt;/</span><span class="e">title</span><span class="d">&gt;</span></div>
<div class="ln" style="top:184.40px">11</div>
<div class="cl" style="top:184.40px">    <span class="d">&lt;/</span><span class="e">head</span><span class="d">&gt;</span></div>
<div class="ln" style="top:200.35px">12</div>
<div class="cl" style="top:200.35px">    <span class="d">&lt;</span><span class="e">body</span><span class="d">&gt;</span></div>
<div class="ln" style="top:216.30px">13</div>
<div class="cl" style="top:216.30px">       <span class="c">&lt;!-- www.123contactform.com script begins here --&gt;</span></div>
<div class="ln" style="top:232.25px">14</div>
<div class="ln" style="top:248.20px">15</div>
<div class="cl" style="top:248.20px"><span class="d">&lt;</span><span class="e">script</span> <span class="a">type</span><span class="d">=</span><span class="v">"text/javascript"</span><span class="d">&gt;</span><span class="k">var</span> <span class="j">servicedomain</span><span class="g">=</span><span class="s">"www.123contactform.com"</span><span class="j">;</span> <span class="k">var</span> <span class="j">frmRef=""</span></div>
<div class="ln" style="top:264.15px">16</div>
<div class="ln" style="top:280.10px">17</div>
<div class="cl" style="top:280.10px"><span class="c">&lt;!-- www.123contactform.com script ends here --&gt;</span></div>
<div class="ln" style="top:296.05px">18</div>
<div class="ln" style="top:312.00px">19</div>
<div class="cl" style="top:312.00px">    <span class="d">&lt;/</span><span class="e">body</span><span class="d">&gt;</span></div>
<div class="ln" style="top:327.95px">20</div>
<div class="cl" style="top:327.95px"><span class="d">&lt;/</span><span class="e">html</span><span class="d">&gt;</span></div>
<div class="ln" style="top:343.90px">21</div>
<svg id="arrow" width="892" height="822" viewBox="0 0 892 822">
 <defs><filter id="sh" x="-20%" y="-20%" width="140%" height="140%"><feDropShadow dx="1.6" dy="1.8" stdDeviation="0.9" flood-color="#000" flood-opacity="1"/></filter></defs>
 <g filter="url(#sh)">
  <line x1="697" y1="121" x2="614" y2="197" stroke="#f70000" stroke-width="9" stroke-linecap="round"/>
  <path d="M602.5 207.5 L608 190 L621 204.5 Z" fill="#f70000" stroke="#f70000" stroke-width="2" stroke-linejoin="round"/>
 </g>
</svg>
</body></html>
